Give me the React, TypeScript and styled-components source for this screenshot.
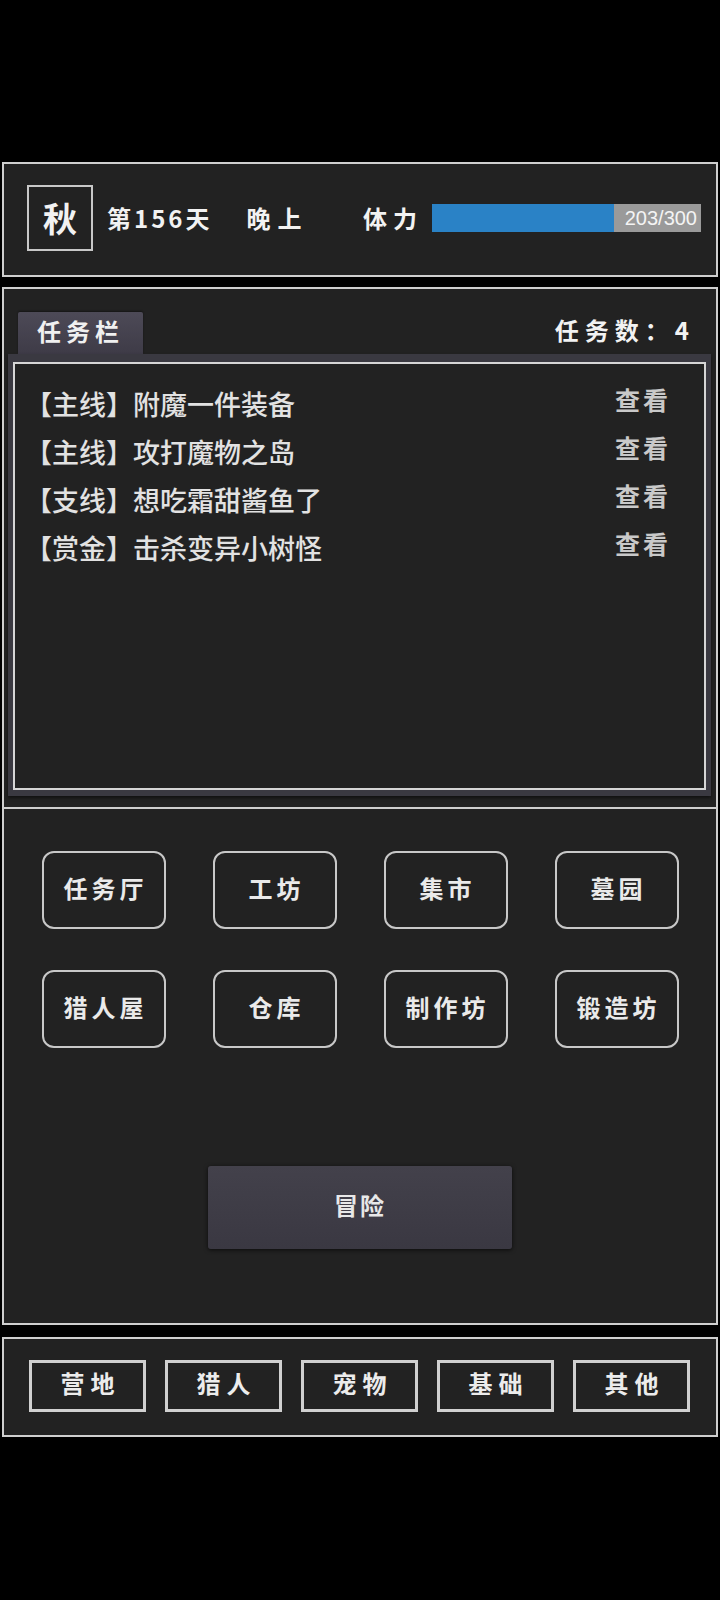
import React from 'react';
import styled, { createGlobalStyle } from 'styled-components';

interface Task {
  id: number;
  kind: string;
  title: string;
}

const tasks: Task[] = [
  { id: 1, kind: '主线', title: '附魔一件装备' },
  { id: 2, kind: '主线', title: '攻打魔物之岛' },
  { id: 3, kind: '支线', title: '想吃霜甜酱鱼了' },
  { id: 4, kind: '赏金', title: '击杀变异小树怪' },
];

const buildings = ['任务厅', '工坊', '集市', '墓园', '猎人屋', '仓库', '制作坊', '锻造坊'];
const tabs = ['营地', '猎人', '宠物', '基础', '其他'];

const stamina = { current: 203, max: 300 };

const App: React.FC = () => {
  const percent = (stamina.current / stamina.max) * 100;

  return (
    <>
      <GlobalStyle />
      <Page>
        <StatusPanel>
          <SeasonBox>秋</SeasonBox>
          <DayLabel>第156天</DayLabel>
          <TimeLabel>晚上</TimeLabel>
          <StaminaLabel>体力</StaminaLabel>
          <StaminaBar>
            <StaminaFill style={{ width: `${percent}%` }} />
            <StaminaText>
              {stamina.current}/{stamina.max}
            </StaminaText>
          </StaminaBar>
        </StatusPanel>

        <MainPanel>
          <TabRow>
            <Tab>任务栏</Tab>
            <TaskCount>任务数：{tasks.length}</TaskCount>
          </TabRow>
          <TaskFrame>
            <TaskBox>
              {tasks.map((task) => (
                <TaskRow key={task.id}>
                  <TaskTitle>
                    【{task.kind}】{task.title}
                  </TaskTitle>
                  <ViewLink>查看</ViewLink>
                </TaskRow>
              ))}
            </TaskBox>
          </TaskFrame>

          <ActionArea>
            <BuildingGrid>
              {buildings.map((name) => (
                <BuildingButton key={name}>{name}</BuildingButton>
              ))}
            </BuildingGrid>
            <AdventureButton>冒险</AdventureButton>
          </ActionArea>
        </MainPanel>

        <NavPanel>
          {tabs.map((name) => (
            <NavButton key={name}>{name}</NavButton>
          ))}
        </NavPanel>
      </Page>
    </>
  );
};

export default App;

const GlobalStyle = createGlobalStyle`
  * {
    box-sizing: border-box;
  }
  body {
    margin: 0;
    background: #000;
    font-family: "Noto Sans CJK SC", "Noto Sans", sans-serif;
    color: #eee;
  }
`;

const Page = styled.div`
  min-height: 1600px;
  padding: 162px 2px 0;
  display: flex;
  flex-direction: column;
`;

const Panel = styled.div`
  background: #222222;
  border: 2px solid #cfcfcf;
`;

const StatusPanel = styled(Panel)`
  height: 115px;
  display: flex;
  align-items: center;
  padding: 0 15px 0 23px;
`;

const SeasonBox = styled.div`
  width: 66px;
  height: 66px;
  border: 2px solid #c8c8c8;
  display: flex;
  align-items: center;
  justify-content: center;
  font-size: 34px;
  font-weight: 700;
  color: #f2f2f2;
  margin-top: -4px;
`;

const HeadText = styled.div`
  font-size: 24px;
  font-weight: 700;
  color: #f2f2f2;
  margin-top: -4px;
`;

const DayLabel = styled(HeadText)`
  margin-left: 14px;
  letter-spacing: 3px;
`;

const TimeLabel = styled(HeadText)`
  margin-left: 34px;
  letter-spacing: 7px;
`;

const StaminaLabel = styled(HeadText)`
  margin-left: auto;
  letter-spacing: 6px;
  margin-right: 9px;
`;

const StaminaBar = styled.div`
  position: relative;
  width: 269px;
  height: 28px;
  background: #9a9a9a;
  margin-top: -4px;
`;

const StaminaFill = styled.div`
  height: 100%;
  background: #2a82c6;
`;

const StaminaText = styled.span`
  position: absolute;
  right: 4px;
  top: 0;
  line-height: 28px;
  font-family: "Liberation Sans", Arial, sans-serif;
  font-size: 20px;
  color: #f4f4f4;
`;

const MainPanel = styled(Panel)`
  margin-top: 10px;
  height: 1038px;
  display: flex;
  flex-direction: column;
  padding-top: 23px;
`;

const TabRow = styled.div`
  display: flex;
  align-items: center;
  justify-content: space-between;
  padding: 0 21px 0 14px;
`;

const Tab = styled.div`
  width: 125px;
  height: 42px;
  display: flex;
  align-items: center;
  justify-content: center;
  padding-bottom: 6px;
  background: linear-gradient(#4d4a57, #3e3b47);
  border-radius: 2px 2px 0 0;
  font-size: 24px;
  font-weight: 700;
  color: #f0f0f0;
  letter-spacing: 5px;
  box-shadow: 0 -1px 2px rgba(0, 0, 0, 0.4);
`;

const TaskCount = styled.div`
  font-size: 24px;
  font-weight: 700;
  color: #f2f2f2;
  letter-spacing: 6px;
  margin-top: -8px;
`;

const TaskFrame = styled.div`
  margin: 0 5px 0 4px;
  padding: 8px 5px 6px;
  background: #3a3941;
  box-shadow: 0 2px 3px rgba(0, 0, 0, 0.5);
`;

const TaskBox = styled.div`
  height: 428px;
  border: 2px solid #d6d6d6;
  background: #222222;
  padding: 15px 33px 0 10px;
  display: flex;
  flex-direction: column;
`;

const TaskRow = styled.div`
  display: flex;
  align-items: center;
  justify-content: space-between;
  height: 48px;
`;

const TaskTitle = styled.div`
  font-size: 27px;
  font-weight: 500;
  color: #e2e2e2;
`;

const ViewLink = styled.div`
  font-size: 25px;
  font-weight: 700;
  color: #c9c9c9;
  letter-spacing: 3px;
  margin-top: -9px;
`;

const ActionArea = styled.div`
  margin-top: 11px;
  border-top: 2px solid #cfcfcf;
  flex: 1;
  display: flex;
  flex-direction: column;
  align-items: center;
  padding-top: 42px;
`;

const BuildingGrid = styled.div`
  display: grid;
  grid-template-columns: repeat(4, 124px);
  grid-auto-rows: 78px;
  column-gap: 47px;
  row-gap: 41px;
`;

const BuildingButton = styled.div`
  border: 2px solid #c8c8c8;
  border-radius: 12px;
  display: flex;
  align-items: center;
  justify-content: center;
  padding: 0 0 6px 4px;
  font-size: 24px;
  font-weight: 700;
  color: #eaeaea;
  letter-spacing: 4px;
`;

const AdventureButton = styled.div`
  margin-top: 118px;
  width: 304px;
  height: 83px;
  border-radius: 3px;
  background: linear-gradient(#43414b, #3a3842);
  box-shadow: 0 1px 4px rgba(0, 0, 0, 0.7);
  display: flex;
  align-items: center;
  justify-content: center;
  padding-bottom: 6px;
  font-size: 24px;
  font-weight: 700;
  color: #e8e8e8;
  letter-spacing: 2px;
`;

const NavPanel = styled(Panel)`
  margin-top: 12px;
  height: 100px;
  display: flex;
  align-items: center;
  gap: 19px;
  padding: 0 26px 2px 25px;
`;

const NavButton = styled.div`
  width: 117px;
  height: 52px;
  border: 3px solid #d0d0d0;
  display: flex;
  align-items: center;
  justify-content: center;
  padding: 0 0 8px 6px;
  font-size: 24px;
  font-weight: 700;
  color: #ececec;
  letter-spacing: 6px;
`;
